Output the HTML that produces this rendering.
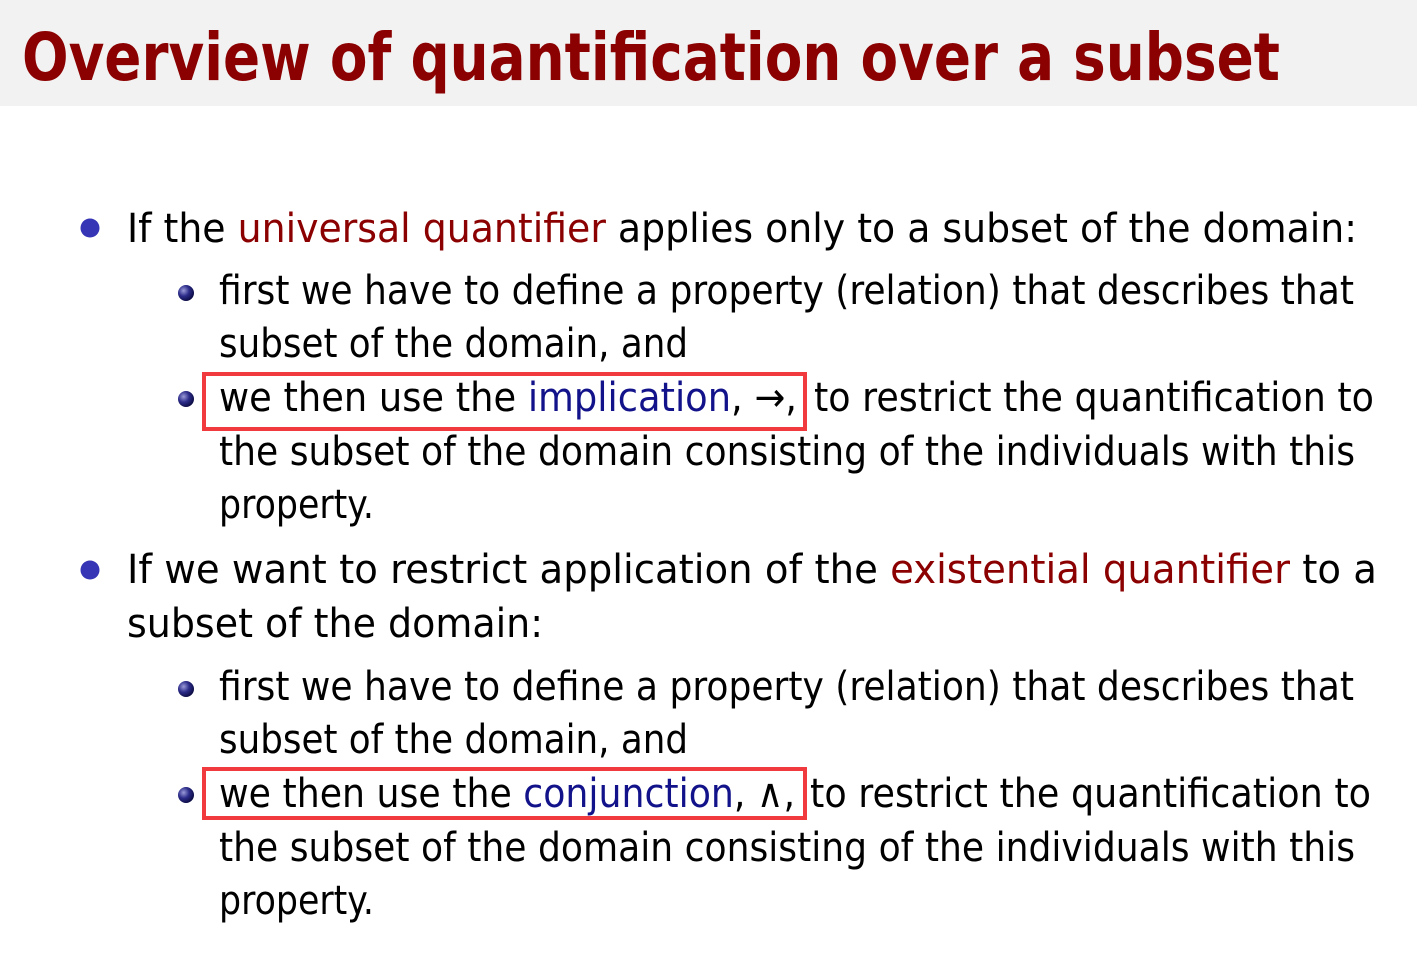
<!DOCTYPE html>
<html><head><meta charset="utf-8"><style>
html,body{margin:0;padding:0;background:#fff;width:1417px;height:967px;overflow:hidden}
svg{display:block}
text{font-family:"DejaVu Sans","Liberation Sans",sans-serif;font-size:40px;fill:#000}
.r{fill:#8b0000}.b{fill:#12128a}
</style></head><body>
<svg width="1417" height="967" viewBox="0 0 1417 967">
<defs><radialGradient id="g" cx="0.35" cy="0.35" r="0.7"><stop offset="0" stop-color="#9a9ad8"/><stop offset="0.5" stop-color="#2c2c8a"/><stop offset="1" stop-color="#0a0a40"/></radialGradient></defs>
<rect x="0" y="0" width="1417" height="106" fill="#f2f2f2"/>
<text x="22" y="80" textLength="1258" lengthAdjust="spacingAndGlyphs" style="font-size:66px;font-weight:bold;fill:#8b0000">Overview of quantification over a subset</text>

<circle cx="90" cy="228" r="9.5" fill="#3535b5"/>
<circle cx="90" cy="570" r="9.5" fill="#3535b5"/>
<circle cx="186" cy="293" r="8" fill="url(#g)"/>
<circle cx="186" cy="399" r="8" fill="url(#g)"/>
<circle cx="186" cy="689" r="8" fill="url(#g)"/>
<circle cx="186" cy="795" r="8" fill="url(#g)"/>

<text x="127" y="242" textLength="1230" lengthAdjust="spacingAndGlyphs">If the <tspan class="r">universal quantifier</tspan> applies only to a subset of the domain:</text>
<text x="219" y="304" textLength="1135" lengthAdjust="spacingAndGlyphs">first we have to define a property (relation) that describes that</text>
<text x="219" y="357" textLength="469" lengthAdjust="spacingAndGlyphs">subset of the domain, and</text>
<text x="219" y="411" textLength="578" lengthAdjust="spacingAndGlyphs">we then use the <tspan class="b">implication</tspan>, →,</text>
<text x="814" y="411" textLength="560" lengthAdjust="spacingAndGlyphs">to restrict the quantification to</text>
<text x="219" y="465" textLength="1136" lengthAdjust="spacingAndGlyphs">the subset of the domain consisting of the individuals with this</text>
<text x="219" y="518" textLength="155" lengthAdjust="spacingAndGlyphs">property.</text>
<rect x="204" y="374" width="601" height="55" fill="none" stroke="#f03a3e" stroke-width="4"/>

<text x="127" y="583" textLength="1250" lengthAdjust="spacingAndGlyphs">If we want to restrict application of the <tspan class="r">existential quantifier</tspan> to a</text>
<text x="127" y="637" textLength="416" lengthAdjust="spacingAndGlyphs">subset of the domain:</text>
<text x="219" y="700" textLength="1135" lengthAdjust="spacingAndGlyphs">first we have to define a property (relation) that describes that</text>
<text x="219" y="753" textLength="469" lengthAdjust="spacingAndGlyphs">subset of the domain, and</text>
<text x="219" y="807" textLength="576" lengthAdjust="spacingAndGlyphs">we then use the <tspan class="b">conjunction</tspan>, ∧,</text>
<text x="810" y="807" textLength="561" lengthAdjust="spacingAndGlyphs">to restrict the quantification to</text>
<text x="219" y="861" textLength="1136" lengthAdjust="spacingAndGlyphs">the subset of the domain consisting of the individuals with this</text>
<text x="219" y="914" textLength="155" lengthAdjust="spacingAndGlyphs">property.</text>
<rect x="204" y="769" width="601" height="49" fill="none" stroke="#f03a3e" stroke-width="4"/>
</svg>
</body></html>
